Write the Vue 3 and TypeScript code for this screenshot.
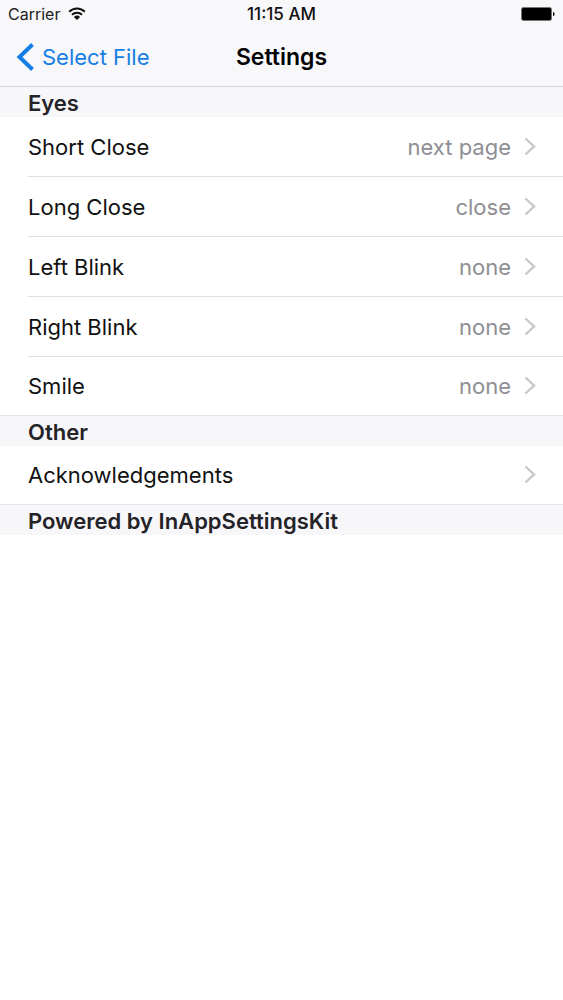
<script setup lang="ts">
interface Row {
  label: string
  value?: string
}
interface Section {
  title: string
  rows: Row[]
}

const sections: Section[] = [
  {
    title: 'Eyes',
    rows: [
      { label: 'Short Close', value: 'next page' },
      { label: 'Long Close', value: 'close' },
      { label: 'Left Blink', value: 'none' },
      { label: 'Right Blink', value: 'none' },
      { label: 'Smile', value: 'none' },
    ],
  },
  { title: 'Other', rows: [{ label: 'Acknowledgements' }] },
  { title: 'Powered by InAppSettingsKit', rows: [] },
]
</script>

<template>
  <div class="screen">
    <header class="top">
      <div class="status">
        <div class="carrier">
          <span>Carrier</span>
          <svg class="wifi" width="18" height="14" viewBox="0 0 18 14" aria-label="Wi-Fi">
            <path d="M1.2 4.700a11 11 0 0 1 15.600 0M4 7.700a7.100 7.100 0 0 1 10 0" fill="none" stroke="#111" stroke-width="2" />
            <path d="M9 13 5.900 9.900a4.400 4.400 0 0 1 6.200 0z" fill="#111" />
          </svg>
        </div>
        <span class="time">11:15 AM</span>
        <svg class="battery" width="34" height="14" viewBox="0 0 34 14" aria-label="Battery full">
          <rect x="0.500" y="0.500" width="30" height="13" rx="2" fill="#000" stroke="#777" />
          <path d="M32 5c1.300.4 1.600 1.200 1.600 2s-.3 1.600-1.600 2z" fill="#000" />
        </svg>
      </div>
      <nav class="bar">
        <button class="back" type="button">
          <svg width="18" height="28" viewBox="0 0 18 28" aria-hidden="true">
            <path d="M16.500 1.500 3.500 14l13 12.500" fill="none" stroke="#157ee6" stroke-width="4" />
          </svg>
          <span>Select File</span>
        </button>
        <h1 class="title">Settings</h1>
      </nav>
    </header>
    <main>
      <section v-for="section in sections" :key="section.title">
        <h2 class="heading">{{ section.title }}</h2>
        <ul v-if="section.rows.length" class="rows">
          <li v-for="row in section.rows" :key="row.label">
            <button class="row" type="button">
              <span class="label">{{ row.label }}</span>
              <span v-if="row.value" class="value">{{ row.value }}</span>
              <svg class="chevron" width="12" height="20" viewBox="0 0 12 20" aria-hidden="true">
                <path d="M1.500 1.500 10 9.500l-8.500 8" fill="none" stroke="#c7c7cc" stroke-width="2.400" />
              </svg>
            </button>
          </li>
        </ul>
      </section>
    </main>
  </div>
</template>

<style>
body {
  margin: 0;
  background: #fff;
}
</style>

<style scoped>
.screen {
  min-height: 100vh;
  background: #fff;
  color: #111;
  font-family: Inter, "Liberation Sans", sans-serif;
  font-size: 22px;
  line-height: 30px;
}
.top {
  background: #f8f7fa;
  border-bottom: 1px solid #d3d2d6;
}
.status {
  display: grid;
  grid-template-columns: 1fr auto 1fr;
  align-items: center;
  height: 28px;
  padding: 0 8px;
  font-size: 16px;
  line-height: 28px;
}
.carrier {
  display: flex;
  align-items: center;
  gap: 8px;
  color: #222;
}
.time {
  font-size: 17px;
  font-weight: 500;
}
.battery {
  justify-self: end;
}
.bar {
  display: grid;
  grid-template-columns: 1fr auto 1fr;
  align-items: center;
  height: 58px;
  padding: 0 16px;
}
button {
  border: 0;
  background: none;
  font: inherit;
  cursor: pointer;
}
.back {
  justify-self: start;
  display: flex;
  align-items: center;
  gap: 8px;
  padding: 0;
  color: #157ee6;
  white-space: nowrap;
}
.title {
  margin: 0;
  font-size: 23px;
  font-weight: 600;
  color: #030303;
}
.heading {
  margin: 0;
  padding: 2px 28px 0;
  background: #f7f6f9;
  color: #242327;
  font-size: 22px;
  font-weight: 600;
  line-height: 28px;
}
.heading + .rows {
  border-bottom: 1px solid #e4e3e6;
}
.rows {
  margin: 0;
  padding: 0;
  list-style: none;
}
.rows li {
  margin-left: 28px;
}
.rows li:not(:last-child) {
  border-bottom: 1px solid #e0dfe2;
}
.row {
  display: flex;
  align-items: center;
  width: 100%;
  height: 59px;
  padding: 0 27px 0 0;
  color: #111;
  text-align: left;
}
.rows li:last-child .row {
  height: 58px;
}
.label {
  flex: 1;
}
.value {
  color: #8e8e93;
}
.chevron {
  margin-left: 13px;
}
</style>
